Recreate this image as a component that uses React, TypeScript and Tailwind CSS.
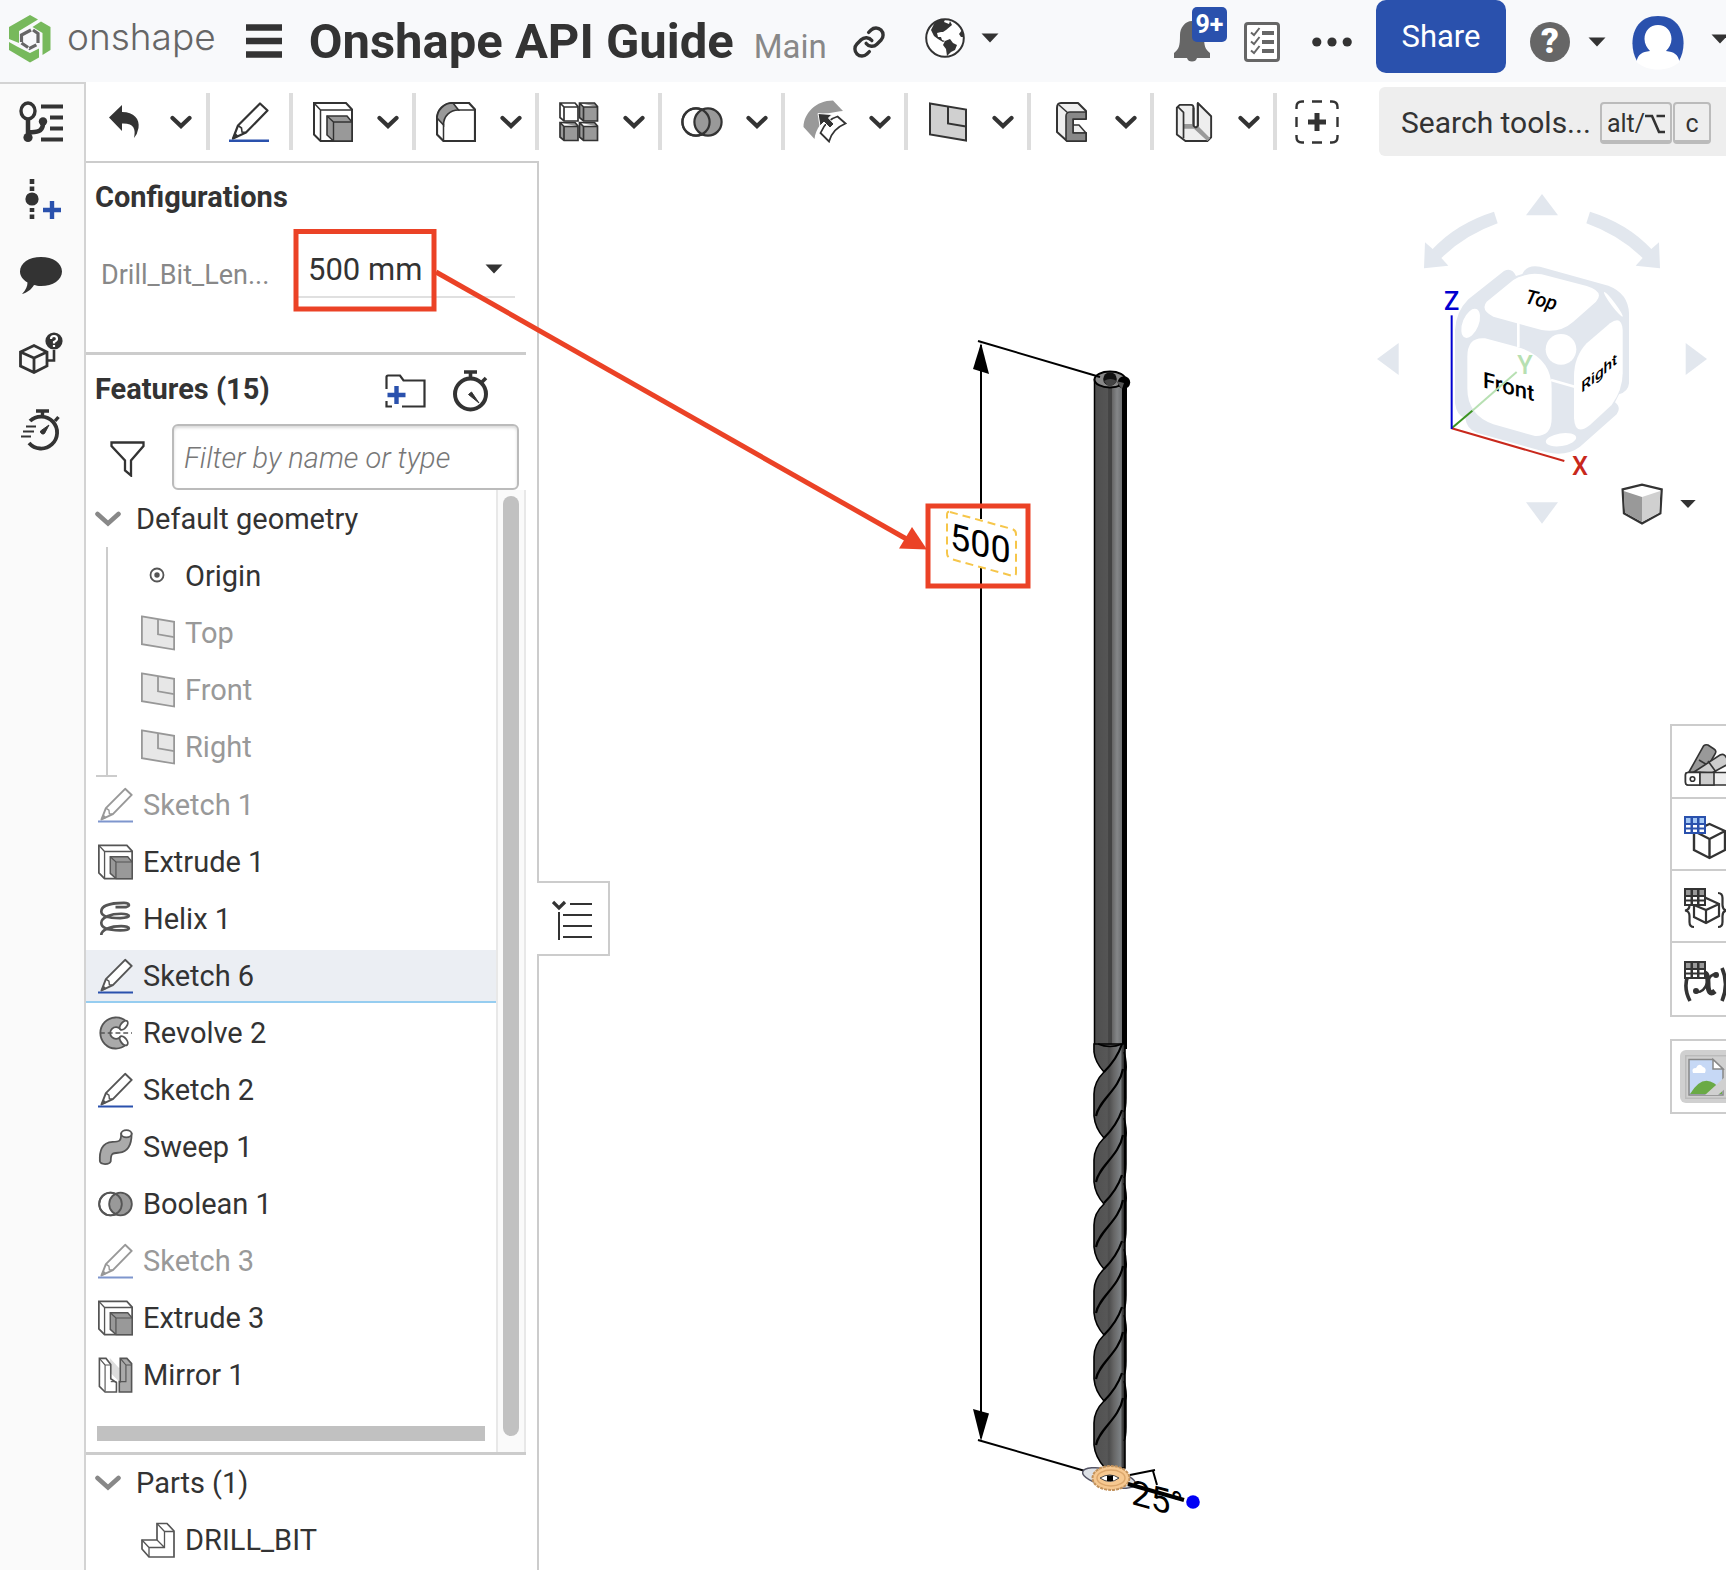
import React from "react";
import { Link } from "lucide-react";

type IconProps = { className?: string };

const INK = "#333333";
const BLUE = "#2a51ad";

/* ---------- small shared glyphs ---------- */

function Caret() {
  return (
    <svg width="18" height="10" viewBox="0 0 18 10" className="shrink-0">
      <path d="M0.5 0.5H17.5L9 9.5Z" fill={INK} />
    </svg>
  );
}

function Chevron() {
  return (
    <svg width="22" height="14" viewBox="0 0 22 14" className="shrink-0">
      <path d="M2.5 3L11 11L19.5 3" fill="none" stroke={INK} strokeWidth="4.2" strokeLinecap="round" />
    </svg>
  );
}

function GrayChevron() {
  return (
    <svg width="26" height="16" viewBox="0 0 26 16" className="shrink-0">
      <path d="M2.5 3L13 12.5L23.5 3" fill="none" stroke="#888" strokeWidth="4.6" strokeLinecap="round" />
    </svg>
  );
}

/* ---------- feature icons ---------- */

function PencilIcon({ className }: IconProps) {
  return (
    <svg viewBox="0 0 40 40" className={className}>
      <path d="M31 1.5L38.5 8.5L17 30.5L4 36.5L9 23.5Z" fill="#fff" stroke="currentColor" strokeWidth="2.2" strokeLinejoin="round" />
      <path d="M9 23.5L12.5 26L13 30L17 30.5" fill="none" stroke="currentColor" strokeWidth="1.6" />
      <path d="M3 37.5L6 30.5L10 34.5Z" fill="currentColor" />
      <path d="M0 38.8H40" stroke={BLUE} strokeWidth="2.4" />
    </svg>
  );
}

function ExtrudeIcon({ className }: IconProps) {
  return (
    <svg viewBox="0 0 40 40" className={className} fill="none" stroke="currentColor" strokeWidth="2">
      <path d="M1 1H33L39 7.5V39H7.5L1 32.5Z" fill="#fff" />
      <path d="M1 1L7.5 8H39M7.5 8V39" strokeWidth="1.5" />
      <path d="M14 14H34L39 20V39H20.5L14 33Z" fill="#999" strokeWidth="1.6" />
      <path d="M14 14L20.5 20H39M20.5 20V39" strokeWidth="1.4" />
    </svg>
  );
}

function FilletIcon({ className }: IconProps) {
  return (
    <svg viewBox="0 0 40 40" className={className} fill="none" stroke="currentColor" strokeWidth="2.2">
      <path d="M1 17C1 8 8 1 17 1H33L39 7.5V39H7.5L1 32.5Z" fill="#fff" />
      <path d="M1 17C1 8 8 1 17 1L22.5 8C14 8 7.5 14 7.5 23L1 16Z" fill="#999" strokeWidth="1.6" />
      <path d="M22 8H39M7.5 22V39" strokeWidth="1.5" />
    </svg>
  );
}

function PatternIcon({ className }: IconProps) {
  const cube = "M0 0H15L18 3.5V18H4L0 14.5Z M0 0L4 4H18M4 4V18";
  return (
    <svg viewBox="0 0 40 40" className={className} fill="#999" stroke="currentColor" strokeWidth="1.7">
      <path transform="translate(1 1)" d={cube} fill="#fff" />
      <path transform="translate(20.5 1)" d={cube} />
      <path transform="translate(1 20.5)" d={cube} />
      <path transform="translate(20.5 20.5)" d={cube} />
    </svg>
  );
}

function BooleanIcon({ className }: IconProps) {
  return (
    <svg viewBox="0 0 42 40" className={className} fill="none" stroke="currentColor" strokeWidth="2.2">
      <circle cx="15" cy="20" r="13.6" fill="#fff" />
      <circle cx="27" cy="20" r="13.6" fill="#999" />
      <circle cx="15" cy="20" r="13.6" />
    </svg>
  );
}

function SurfaceIcon({ className }: IconProps) {
  return (
    <svg viewBox="0 0 44 43" className={className}>
      <path d="M11.5 39L0.5 27C1 13 13 0.5 30 0.5L40 11C32 11.5 25 14 16 14L17 25C14 29 12 34 11.5 39Z" fill="#999" />
      <path d="M34.5 16.5L42.5 23.5C34 27 28 34 26 41.5L17.5 33C21 25 27 18.5 34.5 16.5Z" fill="#fff" stroke={INK} strokeWidth="1.8" />
      <path d="M15 13.5L29 14.5L25.5 18L31 24L27 28L21 22L17 26Z" fill={INK} stroke="#fff" strokeWidth="1" />
    </svg>
  );
}

function PlaneIcon({ className }: IconProps) {
  return (
    <svg viewBox="0 0 38 40" className={className} fill="none" stroke="currentColor" strokeWidth="2">
      <path d="M1 1.5L37 7.5V38.5L1 32.5Z" fill="#d0d0d0" />
      <path d="M19 4.5V21.5L37 24.5" />
    </svg>
  );
}

function SheetIcon({ className }: IconProps) {
  return (
    <svg viewBox="0 0 31 40" className={className} fill="none" stroke="currentColor" strokeWidth="2" strokeLinejoin="round">
      <path d="M1 6C1 3 2 1 5 1H22L30 9V17H17V31H30V39H11L1 30Z" fill="#eee" />
      <path d="M17 23H23L30 31H17Z" fill="#eee" strokeWidth="1.5" />
      <path d="M10 38V14C10 11.5 12 10 14 10H30V17H17V31H30V39H12C11 39 10 38.5 10 38Z" fill="#888" strokeWidth="1.6" />
      <path d="M3 3L12 11" strokeWidth="1.5" />
    </svg>
  );
}

function BendIcon({ className }: IconProps) {
  return (
    <svg viewBox="0 0 38 42" className={className} fill="none" stroke="currentColor" strokeWidth="2" strokeLinejoin="round">
      <path d="M1 6L4 3H16Q18.5 3 18.5 6V25Q21 28.5 23 25V1L37 15V37L33 41H10L1 34Z" fill="#eee" />
      <path d="M8 23H18.5Q21 28.5 23 25L36 38L33 41L19 28H8Z" fill="#999" stroke="none" />
      <path d="M2 5L8 11V38" strokeWidth="1.8" />
      <path d="M18.5 6V25Q21 28.5 23 25V1" />
    </svg>
  );
}

function AddToolIcon({ className }: IconProps) {
  return (
    <svg viewBox="0 0 44 44" className={className} fill="none" stroke={INK} strokeWidth="2.4">
      <path d="M1.5 9V7Q1.5 1.5 7 1.5H9M35 1.5H37Q42.5 1.5 42.5 7V9M42.5 35V37Q42.5 42.5 37 42.5H35M9 42.5H7Q1.5 42.5 1.5 37V35" />
      <path d="M17 1.5H27M17 42.5H27M1.5 17V27M42.5 17V27" />
      <path d="M22 13V31M13 22H31" strokeWidth="5" />
    </svg>
  );
}

function UndoIcon({ className }: IconProps) {
  return (
    <svg viewBox="0 0 31 33" className={className}>
      <path d="M0 12.5L13 0V7C25 7 31 14 29.5 23Q28.5 29 25 33C27 24 25 18 13 18.5V26Z" fill={INK} />
    </svg>
  );
}

function HelixIcon({ className }: IconProps) {
  return (
    <svg viewBox="0 0 34 38" className={className} fill="none" stroke="currentColor" strokeWidth="2.8">
      <path d="M17 6.5H28C33 5.5 32 2 26 2C15 2 2 4 2 11C2 16 8 18 22 18C34 18 34 13.5 23 13.5C12 13.5 2 17 2 23C2 29 10 31 22 31C34 31 34 26.5 23 26.5C12 26.5 2 30 2 36" />
    </svg>
  );
}

function RevolveIcon({ className }: IconProps) {
  return (
    <svg viewBox="0 0 36 36" className={className} fill="none" stroke="currentColor" strokeWidth="1.9">
      <path d="M29 6A16 16 0 1 0 29 30L23 22A6 6 0 1 1 23 14Z" fill="#aaa" />
      <ellipse cx="26.5" cy="10" rx="3" ry="5.5" transform="rotate(38 26.5 10)" fill="#fff" />
      <ellipse cx="26.5" cy="26" rx="3" ry="5.5" transform="rotate(-38 26.5 26)" fill="#fff" />
      <path d="M2 18H35" strokeDasharray="5 3" strokeWidth="1.5" />
    </svg>
  );
}

function SweepIcon({ className }: IconProps) {
  return (
    <svg viewBox="0 0 36 38" className={className} fill="none" stroke="currentColor" strokeWidth="1.9">
      <path d="M1.5 34C1 24 3 14 15 13.5C22 13.5 24 13 24 5H35C35 18 31 24 22 25C15 25.5 13 25 13 34Q12 37 7 37Q2 37 1.5 34Z" fill="#aaa" />
      <ellipse cx="29.5" cy="5" rx="5.5" ry="3.8" fill="#fff" />
    </svg>
  );
}

function MirrorIcon({ className }: IconProps) {
  return (
    <svg viewBox="0 0 36 38" className={className} fill="none" stroke="currentColor" strokeWidth="1.7">
      <path d="M12 1L22 12V26L12 16Z" fill="#ddd" stroke="none" />
      <path d="M1 1.5H8L13 8V23L19 27V37H7L1 31Z" fill="#fff" />
      <path d="M1 1.5L7 8.5V36M7 8.5H13" strokeWidth="1.2" />
      <path d="M13 26H19" strokeWidth="1.2" />
      <path d="M23 1.5H30L35 7V37H22V26H23Z" fill="#aaa" />
      <path d="M23 1.5L29 8.5H35M29 8.5V26H22" strokeWidth="1.2" />
    </svg>
  );
}

function PartIcon({ className }: IconProps) {
  return (
    <svg viewBox="0 0 34 36" className={className} fill="none" stroke="currentColor" strokeWidth="1.7">
      <path d="M16 1.5H26L33 9V35H8L1 27V18H16Z" fill="#fff" />
      <path d="M1 18L8 25.5H23.5V9.5H33M16 1.5L23.5 9.5M16 18L23.5 25.5M8 25.5V35" strokeWidth="1.3" />
    </svg>
  );
}

function OriginIcon({ className }: IconProps) {
  return (
    <svg viewBox="0 0 34 36" className={className}>
      <circle cx="16" cy="17" r="6.5" fill="none" stroke="#555" strokeWidth="1.8" />
      <circle cx="16" cy="17" r="2.7" fill="#555" />
    </svg>
  );
}

/* ---------- header ---------- */

function Logo() {
  return (
    <svg width="42" height="48" viewBox="0 0 42 48" className="shrink-0">
      <g fill="#77b95c">
        <path d="M21 0L29 4.5L10 16V28L0 24V12Z" />
        <path d="M32 6.5L41.5 12V35L33.5 40V18L23.5 12Z" />
        <path d="M0 27L8 31.5L21 38L30 33.5V42.5L21 47.5L0 35Z" />
      </g>
      <g fill="none" stroke="#666" strokeWidth="3.2">
        <path d="M22 15L12.5 20V27" />
        <path d="M24 15L29 18.5V28" />
        <path d="M12.5 28L20.5 33.5L28 29.5" strokeDasharray="8 1.5" />
      </g>
    </svg>
  );
}

function GlobeIcon() {
  return (
    <svg width="40" height="40" viewBox="0 0 40 40" className="shrink-0">
      <circle cx="20" cy="20" r="18.8" fill="#fff" stroke={INK} strokeWidth="2" />
      <path d="M10 4Q14 1 20 1.5L19 4L24 6L25 3L27 7L21 12L18 14L16 14L12 15L13 19L16 19L17 22L20 23L18 24L13 21L9 18L6 12Z" fill={INK} />
      <path d="M20 23L25 21L28 25L32 27L30 32L26 34L22 38L21 31L18 27Z" fill={INK} />
      <path d="M37 12L34 16L36 19L39 19Z" fill={INK} />
    </svg>
  );
}

function BellIcon() {
  return (
    <svg width="36" height="42" viewBox="0 0 36 42">
      <path d="M18 1C25 1 30 8 30 15C30 26 31 29 36 33V38H23Q22 41.5 18 41.5T13 38H0V33C5 29 6 26 6 15C6 8 11 1 18 1Z" fill="#666" />
    </svg>
  );
}

function ChecklistIcon() {
  return (
    <svg width="36" height="40" viewBox="0 0 36 40" fill="none" stroke="#666">
      <rect x="1.5" y="1.5" width="33" height="37" rx="2.5" strokeWidth="3" fill="#fff" />
      <path d="M18 11H30M18 20H30M18 29H30" strokeWidth="4" />
      <path d="M7 10.5L10 13L15.5 6M7 19.5L10 22L15.5 15M7 28.5L10 31L15.5 24" strokeWidth="2" />
    </svg>
  );
}

function AvatarIcon() {
  return (
    <svg width="52" height="54" viewBox="0 0 52 54">
      <path d="M5 45C-4 30 -1 0 26 0S56 30 47 45Z" fill={BLUE} />
      <path d="M26 9C34 9 39.5 15 39.5 23C39.5 28 37 32 34 35C42 36 46 38 47.5 46C42 51 34 53.5 26 53.5S10 51 4.5 46C6 38 10 36 18 35C15 32 12.5 28 12.5 23C12.5 15 18 9 26 9Z" fill="#fff" />
    </svg>
  );
}

function Header() {
  return (
    <header className="flex h-[82px] shrink-0 items-start bg-[#f8f9fb]">
      <a href="#home" aria-label="onshape" className="flex h-[78px] items-center pl-[9px]">
        <Logo />
        <span className="ml-4 pb-1 text-[37px] leading-10 font-light text-[#666] font-[Inter,sans-serif]">onshape</span>
      </a>
      <button aria-label="Menu" className="mt-6 ml-[30px] shrink-0">
        <svg width="36" height="34" viewBox="0 0 36 34">
          <path d="M0 3.5H36M0 17H36M0 30.5H36" stroke={INK} strokeWidth="6.6" />
        </svg>
      </button>
      <div className="ml-[27px] flex h-[82px] items-baseline gap-5 whitespace-nowrap">
        <h1 className="text-[49px] leading-[84px] font-bold">Onshape API Guide</h1>
        <span className="text-[33px] text-[#888]">Main</span>
      </div>
      <button aria-label="Copy link" className="mt-[25px] ml-[25px]">
        <Link size={34} strokeWidth={2.4} />
      </button>
      <button aria-label="Visibility" className="mt-[18px] ml-[39px] flex items-center gap-4">
        <GlobeIcon />
        <Caret />
      </button>

      <div className="ml-auto flex shrink-0 items-start">
        <button aria-label="Notifications" className="relative mt-5 h-[42px] w-9">
          <BellIcon />
          <span className="absolute -top-[13px] left-[18px] flex h-[35px] w-[35px] items-center justify-center rounded-[5px] bg-[#2a51ad] pt-px text-[25px] font-bold text-white">
            9+
          </span>
        </button>
        <button aria-label="Tasks" className="mt-[22px] ml-[34px]">
          <ChecklistIcon />
        </button>
        <button aria-label="More" className="mt-[37px] ml-8">
          <svg width="40" height="10" viewBox="0 0 40 10" fill={INK}>
            <circle cx="4.8" cy="5" r="4.6" />
            <circle cx="20" cy="5" r="4.6" />
            <circle cx="35.2" cy="5" r="4.6" />
          </svg>
        </button>
        <button className="ml-6 h-[73px] w-[130px] rounded-[10px] bg-[#2a51ad] pt-0.5 text-[31px] text-white">Share</button>
        <button aria-label="Help" className="mt-[22px] ml-6 flex items-center gap-[18px]">
          <span className="flex h-10 w-10 items-center justify-center rounded-full bg-[#666] text-[35px] leading-10 font-black text-white">?</span>
          <Caret />
        </button>
        <button aria-label="Account" className="mt-4 ml-[26px]">
          <AvatarIcon />
        </button>
        <button aria-label="Account menu" className="mt-[34px] ml-[27px] w-[15px] overflow-hidden">
          <Caret />
        </button>
      </div>
    </header>
  );
}

/* ---------- left rail ---------- */

function Rail() {
  return (
    <nav className="flex w-[86px] shrink-0 flex-col items-start gap-[35px] border-t-2 border-r-2 border-[#d3d3d3] bg-[#fafafa] pt-[17px] pl-[19px]">
      <button aria-label="Feature list">
        <svg width="44" height="42" viewBox="0 0 44 42" fill="none" stroke={INK}>
          <ellipse cx="9" cy="10" rx="7" ry="8" strokeWidth="3.4" />
          <path d="M9 18V36M9 31C22 32 24 28 24 22" strokeWidth="4.5" />
          <circle cx="9" cy="36.5" r="4.6" fill={INK} stroke="none" />
          <circle cx="24" cy="20.5" r="4.2" fill={INK} stroke="none" />
          <path d="M22 5.5H44M31 16.5H44M31 27.5H44M22 38.5H44" strokeWidth="4" />
        </svg>
      </button>
      <button aria-label="Add version">
        <svg width="44" height="42" viewBox="0 0 44 42">
          <path d="M13 1V6M13 8.5V13M13 30V34M13 36.5V41" stroke={INK} strokeWidth="4.6" />
          <circle cx="13" cy="21" r="6.6" fill={INK} />
          <path d="M33 23V41M24 32H42" stroke={BLUE} strokeWidth="4.4" />
        </svg>
      </button>
      <button aria-label="Comments">
        <svg width="44" height="42" viewBox="0 0 44 42">
          <path d="M22 2C34 2 43 8 43 16.5S34 31 22 31C19 31 17 30.5 15 30C12 35 8 37.5 3 39C7 35 8.5 31 8.5 27.5C4 25 1 21 1 16.5C1 8 10 2 22 2Z" fill={INK} />
        </svg>
      </button>
      <button aria-label="Part help">
        <svg width="44" height="42" viewBox="0 0 44 42" fill="none" stroke={INK} strokeWidth="2.8">
          <path d="M1.5 20L15 13.5L28 20V34L15 40.5L1.5 34ZM1.5 20L15 26L28 20M15 26V40" />
          <path d="M28 28.5H35V18" strokeWidth="2.6" />
          <circle cx="35" cy="9" r="8.6" fill={INK} stroke="none" />
          <path d="M32 7Q32 4 35 4T38 7Q38 8.5 35 10V11.5" stroke="#fff" strokeWidth="2.2" />
          <path d="M35 13V15" stroke="#fff" strokeWidth="2.2" />
        </svg>
      </button>
      <button aria-label="Performance">
        <svg width="44" height="42" viewBox="0 0 44 42" fill="none" stroke={INK}>
          <path d="M11 12A16 16 0 1 1 10 34" strokeWidth="3.8" />
          <path d="M17 2H30M23.5 2V6M36 12L39.5 8" strokeWidth="3.4" />
          <path d="M7 17.5H17M4 22.5H15M2 27.5H12" strokeWidth="2.2" />
          <path d="M30 16L25.5 24.5A2.5 2.5 0 0 1 21.5 22Z" fill={INK} />
        </svg>
      </button>
    </nav>
  );
}

/* ---------- toolbar ---------- */

const TOOLS: { name: string; icon: React.ReactNode }[] = [
  { name: "Extrude", icon: <ExtrudeIcon className="h-10 w-10" /> },
  { name: "Fillet", icon: <FilletIcon className="h-10 w-10" /> },
  { name: "Pattern", icon: <PatternIcon className="h-10 w-10" /> },
  { name: "Boolean", icon: <BooleanIcon className="h-10 w-[42px]" /> },
  { name: "Surface", icon: <SurfaceIcon className="h-[43px] w-11" /> },
  { name: "Plane", icon: <PlaneIcon className="h-10 w-[38px]" /> },
  { name: "Sheet metal", icon: <SheetIcon className="h-10 w-[31px]" /> },
  { name: "Bend", icon: <BendIcon className="h-10 w-[38px]" /> },
];

function Toolbar() {
  return (
    <div className="flex h-[79px] shrink-0 items-center bg-white text-[#333]">
      <div className="flex w-[120px] shrink-0 items-center pl-[23px]">
        <button aria-label="Undo">
          <UndoIcon className="h-[33px] w-[31px]" />
        </button>
        <button aria-label="Undo history" className="ml-[30px]">
          <Chevron />
        </button>
      </div>
      <div className="flex h-[57px] w-[83px] shrink-0 items-center border-l-4 border-[#ddd] pl-[19px]">
        <button aria-label="Sketch">
          <PencilIcon className="h-10 w-10" />
        </button>
      </div>
      {TOOLS.map((t) => (
        <div key={t.name} className="flex h-[57px] w-[123px] shrink-0 items-center gap-[22px] border-l-4 border-[#ddd] pl-[18px]">
          <button aria-label={t.name} className="flex w-11 justify-center">
            {t.icon}
          </button>
          <button aria-label={t.name + " options"}>
            <Chevron />
          </button>
        </div>
      ))}
      <div className="flex h-[57px] shrink-0 items-center border-l-4 border-[#ddd] pl-[18px]">
        <button aria-label="Add custom feature">
          <AddToolIcon className="h-11 w-11" />
        </button>
      </div>
      <button className="ml-auto flex h-[69px] w-[347px] shrink-0 items-center rounded-l-md bg-[#eee] pt-0.5 pl-[22px] text-[30px] whitespace-nowrap">
        <span className="w-[199px] text-left">Search tools...</span>
        <kbd className="flex h-[42px] w-[72px] items-center justify-center rounded-[4px] border-2 border-b-4 border-[#bbb] pt-1 text-[25px] font-[Roboto,sans-serif]">
          alt/
          <svg width="20" height="20" viewBox="0 0 20 20" fill="none" stroke={INK} strokeWidth="2.6">
            <path d="M0 2H7L14 18H20M11.5 2H20" />
          </svg>
        </kbd>
        <kbd className="ml-px flex h-[42px] w-[38px] items-center justify-center rounded-[4px] border-2 border-b-4 border-[#bbb] pt-1 text-[25px] font-[Roboto,sans-serif]">
          c
        </kbd>
      </button>
    </div>
  );
}

/* ---------- feature panel ---------- */

const PLANES = ["Top", "Front", "Right"];

type Feature = { name: string; Icon: (p: IconProps) => React.ReactElement; muted?: boolean; selected?: boolean };

const FEATURES: Feature[] = [
  { name: "Sketch 1", Icon: PencilIcon, muted: true },
  { name: "Extrude 1", Icon: ExtrudeIcon },
  { name: "Helix 1", Icon: HelixIcon },
  { name: "Sketch 6", Icon: PencilIcon, selected: true },
  { name: "Revolve 2", Icon: RevolveIcon },
  { name: "Sketch 2", Icon: PencilIcon },
  { name: "Sweep 1", Icon: SweepIcon },
  { name: "Boolean 1", Icon: BooleanIcon },
  { name: "Sketch 3", Icon: PencilIcon, muted: true },
  { name: "Extrude 3", Icon: ExtrudeIcon },
  { name: "Mirror 1", Icon: MirrorIcon },
];

function FeatureRow({ name, Icon, muted, selected }: Feature) {
  return (
    <li className="flex h-[57px] items-center">
      <button
        className={
          "flex h-[53px] w-full items-center gap-[10px] border-b-2 pt-px pl-3 text-left " +
          (selected ? "border-[#96cdf0] bg-[#ebeef3]" : "border-transparent")
        }
      >
        <span className={muted ? "opacity-60" : ""}>
          <Icon className="h-9 w-[35px] text-[#555]" />
        </span>
        <span className={muted ? "text-[#999]" : ""}>{name}</span>
      </button>
    </li>
  );
}

function FeaturePanel() {
  return (
    <section className="relative flex w-[453px] shrink-0 flex-col border-t-2 border-r-2 border-[#ccc] bg-white pr-[11px] text-[29px] leading-8">
      <div className="h-[192px] shrink-0 border-b-3 border-[#ccc]">
        <h2 className="pt-[18px] pl-[9px] font-bold">Configurations</h2>
        <div className="flex items-center pt-7 pl-[15px]">
          <label htmlFor="bit-length" className="w-[197px] pt-[10px] text-[27px] text-[#888]">
            Drill_Bit_Len...
          </label>
          <div className="flex h-[57px] w-[217px] items-center border-b-2 border-[#e0e0e0]">
            <select id="bit-length" className="w-[187px] appearance-none bg-transparent pt-0.5 pl-[10px] text-[31px] leading-10">
              <option>500 mm</option>
            </select>
            <Caret />
          </div>
        </div>
      </div>

      <div className="flex h-[69px] shrink-0 items-center pt-0.5 pl-[9px]">
        <h2 className="w-[290px] pb-[3px] font-bold">Features (15)</h2>
        <button aria-label="Add folder">
          <svg width="41" height="34" viewBox="0 0 41 34" fill="none" stroke={INK} strokeWidth="2.2">
            <path d="M1.5 15V3Q1.5 1.5 3 1.5H15L18.5 6.5H39.5V32.5H17M7 32.5H1.5V27" />
            <path d="M11.5 12V30M2.5 21H20.5" stroke={BLUE} strokeWidth="4.4" />
          </svg>
        </button>
        <button aria-label="Timing" className="ml-[27px]">
          <svg width="36" height="42" viewBox="0 0 36 42" fill="none" stroke={INK}>
            <circle cx="17.5" cy="24" r="15.5" strokeWidth="4" />
            <path d="M11 2H24M17.5 2V8M29 12L33 8" strokeWidth="3.6" />
            <path d="M15.5 24.5L18.5 22L26 33Z" fill={INK} />
          </svg>
        </button>
      </div>

      <div className="flex h-[66px] shrink-0 items-center pl-6">
        <svg width="35" height="36" viewBox="0 0 35 36" fill="none" stroke={INK} strokeWidth="2.3" className="mt-1 shrink-0">
          <path d="M1.5 1.5H33.5V5L21 19.5V34.5L15 29.5V19.5L1.5 5Z" />
        </svg>
        <input
          aria-label="Filter by name or type"
          placeholder="Filter by name or type"
          className="ml-[27px] h-[66px] w-[347px] rounded-md border-2 border-[#bbb] px-[10px] pt-0.5 text-[29px] font-light italic shadow-[inset_0_2px_3px_rgba(0,0,0,0.15)] placeholder:text-[#777]"
        />
      </div>

      <div className="flex h-[965px] shrink-0 border-b-3 border-[#ccc]">
        <div className="flex w-[410px] flex-col">
          <button className="flex h-[57px] items-center gap-[15px] pt-px pl-[9px]">
            <GrayChevron />
            <span>Default geometry</span>
          </button>
          <div className="ml-[10px] w-[21px] border-b-2 border-[#ccc]">
            <ul className="ml-[10px] w-[360px] border-l-2 border-[#ccc]">
              <li className="flex h-[57px] items-center gap-[10px] pt-px pl-[33px]">
                <OriginIcon className="h-9 w-[34px]" />
                Origin
              </li>
              {PLANES.map((p) => (
                <li key={p} className="flex h-[57px] items-center gap-[10px] pt-px pl-[33px] text-[#999]">
                  <PlaneIcon className="h-9 w-[34px] text-[#333] opacity-50" />
                  {p}
                </li>
              ))}
            </ul>
          </div>
          <ul>
            {FEATURES.map((f) => (
              <FeatureRow key={f.name} {...f} />
            ))}
          </ul>
          <div className="mt-auto mb-[11px] ml-[11px] h-[15px] w-[388px] bg-[#c1c1c1]" />
        </div>
        <div className="flex w-[30px] justify-center border-x-2 border-[#e8e8e8] bg-[#fafafa] pt-[6px] pb-4">
          <div className="w-4 rounded-full bg-[#c1c1c1]" />
        </div>
      </div>

      <div className="leading-[30px]">
        <button className="flex h-14 items-center gap-[15px] pl-[9px]">
          <GrayChevron />
          <span>Parts (1)</span>
        </button>
        <button className="flex h-[57px] items-center gap-[10px] pl-[55px]">
          <PartIcon className="h-9 w-[34px] text-[#555]" />
          <span>DRILL_BIT</span>
        </button>
      </div>

      <button
        aria-label="Collapse feature list"
        className="absolute top-[718px] -right-[73px] flex h-[75px] w-[73px] items-center border-2 border-l-0 border-[#ccc] bg-white pt-[3px] pl-[15px]"
      >
        <span className="absolute top-0 -left-[2px] h-[71px] w-[2px] bg-white" />
        <svg width="40" height="40" viewBox="0 0 40 40" fill="none" stroke={INK}>
          <path d="M1 2L7 8L13 2" strokeWidth="3.2" />
          <path d="M7 12V40" strokeWidth="2" />
          <path d="M18 4H40M11 15H40M11 26H40M11 37H40" strokeWidth="2.2" />
        </svg>
      </button>
    </section>
  );
}

/* ---------- 3D scene ---------- */

const NOTCHES = [1072, 1138, 1203, 1269, 1335, 1401];

function Scene() {
  const body =
    "M1094 1044 V1052 Q1095 1062 1104 1072 " +
    NOTCHES.slice(0, 5)
      .map((n) => `Q1094 ${n + 10} 1094 ${n + 22} V${n + 44} Q1095 ${n + 56} 1104 ${n + 66}`)
      .join(" ") +
    " Q1094 1411 1094 1423 V1445 Q1095 1457 1105 1468 H1125 V1044 Z";
  return (
    <svg width="1187" height="1409" viewBox="539 161 1187 1409" className="pointer-events-none absolute top-0 left-0 overflow-visible" aria-label="Drill bit model">
      <defs>
        <linearGradient id="steel" x1="1094" x2="1127" y1="0" y2="0" gradientUnits="userSpaceOnUse">
          <stop offset="0" stopColor="#4e4e4e" />
          <stop offset="0.43" stopColor="#555" />
          <stop offset="0.44" stopColor="#444" />
          <stop offset="0.54" stopColor="#444" />
          <stop offset="0.55" stopColor="#666" />
          <stop offset="0.7" stopColor="#858789" />
          <stop offset="0.84" stopColor="#6e7072" />
          <stop offset="0.86" stopColor="#000" />
          <stop offset="1" stopColor="#000" />
        </linearGradient>
        <linearGradient id="flute" x1="1094" x2="1127" y1="0" y2="0" gradientUnits="userSpaceOnUse">
          <stop offset="0" stopColor="#505050" />
          <stop offset="0.4" stopColor="#575757" />
          <stop offset="0.45" stopColor="#4c4c4c" />
          <stop offset="0.6" stopColor="#666" />
          <stop offset="0.8" stopColor="#7c8083" />
          <stop offset="0.86" stopColor="#444" />
          <stop offset="1" stopColor="#000" />
        </linearGradient>
      </defs>

      {/* shaft */}
      <rect x="1094" y="379" width="33" height="670" fill="url(#steel)" />
      <path d="M1094.5 379V1050" stroke="#000" strokeWidth="1.5" />
      <ellipse cx="1110" cy="379.5" rx="15.5" ry="8" fill="#888" stroke="#000" strokeWidth="2" />
      <circle cx="1110" cy="379" r="6.8" fill="#111" />
      <path d="M1104 381Q1110 377 1117 381Q1112 388 1107 385Z" fill="#444" />
      <circle cx="1124" cy="382.5" r="6.2" fill="#000" />
      <path d="M1116 381L1122 389L1124 383Z" fill="#555" />

      {/* flutes */}
      <path d={body} fill="url(#flute)" stroke="#000" strokeWidth="1.6" />
      <path d="M1098 1044Q1110 1049 1122 1044" fill="none" stroke="#000" strokeWidth="1.6" />
      {NOTCHES.map((n) => (
        <g key={n} fill="none" stroke="#000" strokeWidth="2.2">
          <path d={`M1104 ${n}Q1117 ${n - 13} 1122 ${n - 28}`} />
          <path d={`M1123 ${n - 3}C1119 ${n + 18} 1099 ${n + 28} 1096 ${n + 44}`} />
          <path d={`M1124 ${n - 20}Q1127 ${n - 10} 1126 ${n} V${n + 26}Q1126 ${n + 36} 1124 ${n + 40}`} fill="#000" strokeWidth="1.5" />
        </g>
      ))}

      {/* length dimension */}
      <g stroke="#000" strokeWidth="2">
        <path d="M981 345V519M981 568V1438" />
        <path d="M978 341L1100 377M978 1440L1092 1473" />
      </g>
      <path d="M981 343L973 369L989 374Z" />
      <path d="M981 1441L973 1409L989 1413.5Z" />
      <path d="M950 512L1012 529Q1016 530 1016 534V573Q1016 577 1011 575.5L951 559Q947 557 947 553V515Q947 511 950 512Z" fill="#fff" stroke="#f6c64a" strokeWidth="2" strokeDasharray="8 5" />
      <text transform="translate(950 548) skewY(15)" fontSize="36" fontFamily="Roboto, sans-serif" fill="#000">
        500
      </text>

      {/* tip and angle dimension */}
      <ellipse cx="1109" cy="1478" rx="27" ry="8.5" transform="rotate(13 1109 1478)" fill="#dde1e6" stroke="#556" strokeWidth="1.5" />
      <ellipse cx="1111" cy="1478" rx="18.5" ry="12" fill="#f6c890" stroke="#c2925c" strokeWidth="2" strokeDasharray="3 1" />
      <ellipse cx="1111" cy="1478" rx="14" ry="8" fill="none" stroke="#dca76c" strokeWidth="1.5" />
      <path d="M1100 1478Q1110 1472 1119 1478Q1110 1485 1100 1478Z" fill="#fff" stroke="#444" />
      <rect x="1107" y="1475.5" width="6" height="5.5" fill="#000" />
      <path d="M1130 1475L1155 1470M1153 1471L1157 1485" fill="none" stroke="#000" strokeWidth="2" />
      <path d="M1128 1484L1184 1500" stroke="#000" strokeWidth="4" />
      <text transform="translate(1131 1504) skewY(15)" fontSize="35" fontFamily="Roboto, sans-serif" fill="#000">
        25°
      </text>
      <circle cx="1193" cy="1502" r="6.8" fill="#0000f5" />

      {/* call-out */}
      <g fill="none" stroke="#eb4226" strokeWidth="5">
        <rect x="296" y="231.5" width="138" height="77.5" />
        <rect x="928" y="506" width="100" height="80" />
        <path d="M436 272L910 541" />
      </g>
      <path d="M927 549.5L899 548.5L912 527Z" fill="#eb4226" />
    </svg>
  );
}

function ViewCube() {
  return (
    <svg viewBox="0 0 1098 1110" className="absolute top-[9px] right-0 h-[370px] w-[366px]" aria-label="View cube">
      <g fill="#e2e7ee">
        <path d="M546 72L594 136H498Z" />
        <path d="M546 1061L594 997H498Z" />
        <path d="M51 567L116 519V615Z" />
        <path d="M1041 567L977 519V615Z" />
        <path d="M402 125Q290 160 218 237L195 217L192 295L265 287L244 264Q315 195 413 160Z" />
        <path d="M690 125Q802 160 874 237L897 217L900 295L827 287L848 264Q777 195 679 160Z" />
        <path d="M285 480Q288 425 325 388L432 303Q455 290 468 318L487 312Q500 283 540 290L745 347Q805 370 807 430V640Q805 665 777 673L765 697Q785 712 770 733L660 830Q620 860 560 847L350 788Q320 778 316 745Q290 738 285 700Z" />
      </g>
      <g fill="#fff">
        <path d="M490 317Q515 308 545 313L680 348Q735 365 708 395L640 455Q600 490 545 480L400 440Q360 420 380 395L460 330Q475 320 490 317Z" />
        <path d="M322 560Q322 500 375 505L470 530Q575 560 575 655V745Q575 800 525 798L400 763Q322 735 322 655Z" />
        <path d="M642 620Q642 560 680 520L750 460Q785 435 788 480V610Q788 660 755 705L690 765Q645 800 642 745Z" />
        <circle cx="603" cy="538" r="46" />
        <ellipse cx="332" cy="460" rx="24" ry="46" transform="rotate(22 332 460)" />
        <ellipse cx="603" cy="809" rx="46" ry="19" transform="rotate(-9 603 809)" />
        <ellipse cx="760" cy="403" rx="46" ry="6" transform="rotate(53 760 403)" />
      </g>
      <path d="M475 458V532M573 630L644 650" stroke="#fff" strokeWidth="8" />
      <g fontFamily="Roboto, sans-serif" fontWeight="500">
        <text transform="translate(369 652) skewY(15)" fontSize="66">Front</text>
        <text transform="translate(664 670) skewY(-40)" fontSize="46">Right</text>
        <text transform="translate(492 398) rotate(14)" fontSize="60" fontStyle="italic">Top</text>
        <text x="252" y="420" fontSize="76" fill="#0000d0">Z</text>
        <text x="472" y="611" fontSize="76" fill="#b7e0b2">Y</text>
        <text x="636" y="916" fontSize="76" fill="#c8281c">X</text>
      </g>
      <g strokeWidth="6" fill="none">
        <path d="M337 722L470 606" stroke="#b7e0b2" />
        <path d="M275 775L337 722" stroke="#3c9422" />
        <path d="M275 775L613 873" stroke="#c8281c" />
        <path d="M275 436V777" stroke="#0000d0" />
      </g>
      <path d="M788 958L846 944L905 958L901 1030L846 1060L792 1030Z" fill="#fff" stroke={INK} strokeWidth="7" />
      <path d="M791 963L846 981V1056L795 1028Z" fill="#999" />
      <path d="M901 963L846 981V1056L898 1028Z" fill="#d0d0d0" />
      <path d="M961 990H1007L984 1014Z" fill={INK} />
    </svg>
  );
}

/* ---------- right dock ---------- */

function GridGlyph({ head, line }: { head: string; line: string }) {
  return (
    <g stroke="none">
      <rect x="0" y="0" width="22" height="18" fill={line} />
      <path d="M2 2H6.5V7H2ZM9 2H13V7H9ZM15.5 2H20V7H15.5Z" fill={head} />
      <path d="M2 9H6.5V11.5H2ZM9 9H13V11.5H9ZM15.5 9H20V11.5H15.5ZM2 13.5H6.5V16H2ZM9 13.5H13V16H9ZM15.5 13.5H20V16H15.5Z" fill="#fff" />
    </g>
  );
}

function RightDock() {
  const cell = "flex w-full items-center overflow-hidden pt-[7px] pl-[12px]";
  return (
    <div className="absolute top-[563px] right-0 w-14">
      <div className="flex flex-col divide-y-2 divide-[#ccc] border-y-2 border-l-2 border-[#ccc] bg-white">
        <button aria-label="Appearances" className={cell + " h-[73px]"}>
          <svg width="50" height="44" viewBox="0 0 50 44" fill="none" stroke={INK} strokeWidth="1.6" className="shrink-0">
            <path d="M5 29L19 4Q20 1 24 2L30 6Q33 8 31 11L20 30Z" fill="#999" />
            <path d="M15 17L25 23" />
            <path d="M10 29L36 12Q40 10 42 14L46 20L28 30Z" fill="#ccc" />
            <path d="M24 18L32 29" />
            <path d="M4 29.5H50V42H4Q1.5 42 1.5 39V32Q1.5 29.5 4 29.5Z" fill="#eee" />
            <path d="M4 29.5H16V42H4Q1.5 42 1.5 39V32Q1.5 29.5 4 29.5Z" fill="#fff" />
            <path d="M16 29.5H30V42H16Z" fill="#ccc" />
            <circle cx="8.5" cy="36" r="2.3" />
          </svg>
        </button>
        <button aria-label="Configurations table" className={cell + " h-[72px]"}>
          <svg width="50" height="44" viewBox="0 0 50 44" className="shrink-0">
            <path d="M10 15L25.5 8L41 15V34L25.5 42L10 34ZM10 15L25.5 23L41 15M25.5 23V42" fill="#fff" stroke={INK} strokeWidth="2.4" />
            <GridGlyph head="#a4c8f5" line={BLUE} />
          </svg>
        </button>
        <button aria-label="Custom table" className={cell + " h-[72px]"}>
          <svg width="50" height="44" viewBox="0 0 50 44" fill="none" stroke={INK} strokeWidth="2.2" className="shrink-0">
            <path d="M10 39Q5.5 39 5.5 34V28Q5.5 23 1 22.5Q5.5 22 5.5 17V14M34 5Q38.5 5 38.5 10V17Q38.5 22 43 22.5Q38.5 23 38.5 28V34Q38.5 39 34 39" />
            <path d="M10 17L22 10L35 16V28L22 35L10 29ZM10 17L22 22L35 16M22 22V35" fill="#fff" />
            <GridGlyph head="#999" line={INK} />
          </svg>
        </button>
        <button aria-label="Variable table" className={cell + " h-[72px]"}>
          <svg width="50" height="44" viewBox="0 0 50 44" className="shrink-0">
            <path d="M4 14Q-1 27 6 40M38 7Q45 23 38 40" fill="none" stroke={INK} strokeWidth="3.6" />
            <path d="M17 14Q24 8 24 22Q24 36 31 30" fill="none" stroke={INK} strokeWidth="5" />
            <path d="M34 13Q26 12 23 22Q20 32 11 31" fill="none" stroke={INK} strokeWidth="2.6" />
            <circle cx="32" cy="14" r="3" fill={INK} />
            <circle cx="12" cy="30" r="3" fill={INK} />
            <GridGlyph head="#999" line={INK} />
          </svg>
        </button>
      </div>
      <div className="mt-[22px] flex h-[75px] items-center overflow-hidden border-y-2 border-l-2 border-[#ccc] bg-white pl-2">
        <button aria-label="Render image" className="flex h-[53px] w-[60px] shrink-0 items-center rounded-md bg-[#d0d0d0] pl-[5px]">
          <svg width="50" height="44" viewBox="0 0 50 44">
            <rect x="0.5" y="0.5" width="55" height="43" fill="none" stroke="#bbb" strokeWidth="2" />
            <path d="M4 4.5H28L38 14V40H4Z" fill="#c6d8f5" stroke="#888" strokeWidth="1.5" />
            <path d="M28 4.5V14H38Z" fill="#fff" stroke="#888" strokeWidth="1.5" />
            <path d="M8 18Q6 13 11 13Q14 7 18 12Q22 13 20 18Z" fill="#fff" />
            <path d="M5 39Q20 14 37 36V39Z" fill="#6aaa46" />
            <path d="M20 40L42 20V32L33 40Z" fill="#d0d0d0" />
          </svg>
        </button>
      </div>
    </div>
  );
}

export default function App() {
  return (
    <div className="flex min-h-screen flex-col overflow-hidden bg-white text-[#333] font-[Roboto,sans-serif]">
      <Header />
      <div className="flex flex-1">
        <Rail />
        <div className="flex min-w-0 flex-1 flex-col">
          <Toolbar />
          <main className="flex flex-1">
            <FeaturePanel />
            <div className="relative flex-1">
              <Scene />
              <ViewCube />
              <RightDock />
            </div>
          </main>
        </div>
      </div>
    </div>
  );
}
